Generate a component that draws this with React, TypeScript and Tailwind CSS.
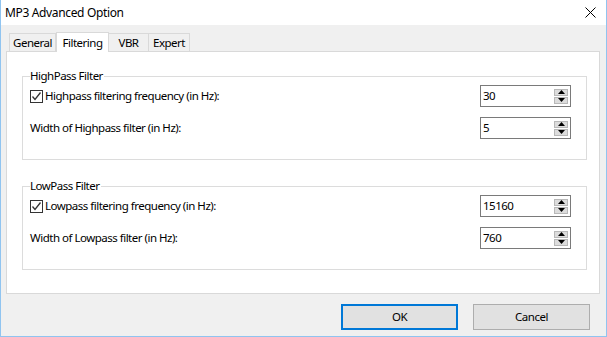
const font = { fontFamily: '"Noto Sans", "Open Sans", sans-serif' };

function Check() {
  return (
    <span className="w-[13px] h-[13px] border border-[#333] bg-white flex items-center justify-center shrink-0">
      <svg width="11" height="11" viewBox="0 0 11 11">
        <path d="M1.5 5.5 L4 8.5 L9.5 1.5" fill="none" stroke="#333" strokeWidth="1.3" />
      </svg>
    </span>
  );
}

function Spin({ value }: { value: string }) {
  return (
    <div className="w-[91px] h-[22px] border border-[#7a7a7a] bg-white flex items-center justify-between pl-[2px] pr-[2px]">
      <span className="leading-none">{value}</span>
      <div className="flex flex-col gap-px">
        <div className="w-[14px] h-[7px] bg-[#dcdcdc] border border-[#b8b8b8] flex items-center justify-center">
          <svg width="7" height="4" viewBox="0 0 7 4"><path d="M0 4 L3.5 0 L7 4 Z" fill="#000" /></svg>
        </div>
        <div className="w-[14px] h-[7px] bg-[#dcdcdc] border border-[#b8b8b8] flex items-center justify-center">
          <svg width="7" height="4" viewBox="0 0 7 4"><path d="M0 0 L3.5 4 L7 0 Z" fill="#000" /></svg>
        </div>
      </div>
    </div>
  );
}

function Group({ title, a, b, va, vb }: { title: string; a: string; b: string; va: string; vb: string }) {
  return (
    <fieldset className="border border-[#dcdcdc] ml-[15px] mr-[12px] pl-[7px] pr-[15px] pt-px pb-[20px]">
      <legend className="leading-[16px] px-0 pr-px">{title}</legend>
      <div className="flex flex-col gap-[10px]">
        <div className="flex items-center justify-between h-[22px]">
          <label className="flex items-center gap-[2px]">
            <Check />
            {a}
          </label>
          <Spin value={va} />
        </div>
        <div className="flex items-center justify-between h-[22px]">
          <span>{b}</span>
          <Spin value={vb} />
        </div>
      </div>
    </fieldset>
  );
}

export default function App() {
  const tabs = ["General", "Filtering", "VBR", "Expert"];
  const widths = ["w-[47px]", "w-[53px]", "w-[41px]", "w-[42px]"];
  return (
    <div style={font} className="w-[607px] h-[337px] bg-[#f0f0f0] border-x border-b border-[#90c4f0] flex flex-col text-black text-[11.5px] tracking-[-0.5px]">
      <div className="h-[25px] bg-white flex items-center justify-between pl-[4px] pr-[10px] shrink-0">
        <span className="text-[12px] tracking-[-0.35px]">MP3 Advanced Option</span>
        <svg width="11" height="11" viewBox="0 0 11 11">
          <path d="M0.5 0.5 L10.5 10.5 M10.5 0.5 L0.5 10.5" stroke="#000" strokeWidth="1" />
        </svg>
      </div>

      <div className="flex items-end h-[20px] mt-[6px] pl-[8px] shrink-0">
        {tabs.map((t, i) =>
          i === 1 ? (
            <div key={t} className={`${widths[i]} h-[20px] bg-white border border-b-0 border-[#d9d9d9] -mb-px relative z-10 flex items-center justify-center`}>
              {t}
            </div>
          ) : (
            <div key={t} className={`${widths[i]} h-[18px] bg-[#f0f0f0] border border-b-0 border-[#d9d9d9] flex items-center justify-center ${i > 1 ? "-ml-px" : ""}`}>
              {t}
            </div>
          )
        )}
      </div>

      <div className="ml-[5px] mr-[6px] h-[243px] bg-white border border-[#d9d9d9] pt-[16px] flex flex-col gap-[18px] shrink-0">
        <Group title="HighPass Filter" a="Highpass filtering frequency (in Hz):" b="Width of Highpass filter (in Hz):" va="30" vb="5" />
        <Group title="LowPass Filter" a="Lowpass filtering frequency (in Hz):" b="Width of Lowpass filter (in Hz):" va="15160" vb="760" />
      </div>

      <div className="flex justify-end gap-[15px] pr-[16px] pt-[10px]">
        <button className="w-[117px] h-[26px] bg-[#e1e1e1] border-2 border-[#0078d7]">OK</button>
        <button className="w-[117px] h-[26px] bg-[#e1e1e1] border border-[#adadad]">Cancel</button>
      </div>
    </div>
  );
}
